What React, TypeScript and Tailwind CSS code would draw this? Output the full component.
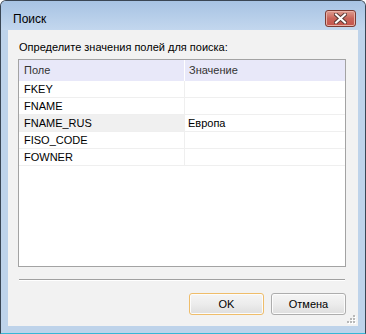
import React from 'react';

const rows: { name: string; value: string; current?: boolean }[] = [
  { name: 'FKEY', value: '' },
  { name: 'FNAME', value: '' },
  { name: 'FNAME_RUS', value: 'Европа', current: true },
  { name: 'FISO_CODE', value: '' },
  { name: 'FOWNER', value: '' },
];

const CloseGlyph = () => (
  <svg width="13" height="11" viewBox="0 0 13 11">
    <path d="M2 1.5 L11 9.5 M11 1.5 L2 9.5" stroke="#5b3a36" strokeWidth="4" strokeLinecap="square" />
    <path d="M2 1.5 L11 9.5 M11 1.5 L2 9.5" stroke="#ffffff" strokeWidth="2" strokeLinecap="square" />
  </svg>
);

const Grip = () => (
  <svg width="10" height="10" viewBox="0 0 10 10" className="absolute right-[2px] bottom-[2px]">
    {[
      [7, 1], [4, 4], [7, 4], [1, 7], [4, 7], [7, 7],
    ].map(([x, y]) => (
      <g key={`${x}-${y}`}>
        <rect x={x + 1} y={y + 1} width="2" height="2" fill="#ffffff" />
        <rect x={x} y={y} width="2" height="2" fill="#b8b8b8" />
      </g>
    ))}
  </svg>
);

const Button = ({ label, primary }: { label: string; primary?: boolean }) => (
  <button
    className={`w-[75px] h-[22px] rounded-[3px] border text-[11px] text-black leading-none flex items-center justify-center bg-gradient-to-b from-[#f5f5f5] via-[#ececec] to-[#dedede] shadow-[inset_0_0_0_1px_#fcfcfc] ${
      primary ? 'border-[#efbd6a]' : 'border-[#adadad]'
    }`}
  >
    {label}
  </button>
);

export default function App() {
  return (
    <div
      className="w-[366px] h-[334px] flex flex-col rounded-t-[6px] border border-[#3a4654] border-b-[#36b7d6] bg-[#bed3ea] pb-[7px]"
      style={{ fontFamily: '"Liberation Sans", Arial, sans-serif' }}
    >
      <div className="h-[29px] flex items-center justify-between pl-[12px] pr-[9px] pt-[6px] rounded-t-[5px] bg-gradient-to-b from-[#a7c3e3] to-[#c3d7ee]">
        <span className="text-[12px] text-black">Поиск</span>
        <div className="w-[31px] h-[17px] rounded-[3px] border border-[#7b3b33] bg-gradient-to-b from-[#dd9c90] via-[#c9645a] to-[#c4544c] flex items-center justify-center shadow-[inset_0_0_0_1px_#e9b0a6]">
          <CloseGlyph />
        </div>
      </div>

      <div className="relative mx-[7px] flex-1 bg-[#f2f2f2] flex flex-col text-[11px] text-black">
        <div className="ml-[11px] mt-[11px] h-[13px] leading-[13px]">Определите значения полей для поиска:</div>

        <div className="ml-[10px] mr-[12px] mt-[5px] h-[208px] border border-[#a3a3a3] bg-white flex flex-col">
          <div className="h-[21px] flex bg-[#e8e8f9] text-[#333]">
            <div className="w-[166px] pl-[5px] flex items-center border-r border-white">Поле</div>
            <div className="flex-1 pl-[4px] flex items-center">Значение</div>
          </div>
          {rows.map((r) => (
            <div key={r.name} className="h-[17px] flex border-b border-[#efefef]">
              <div className={`w-[166px] pl-[5px] flex items-center border-r border-[#efefef] ${r.current ? 'bg-[#f0f0f0]' : ''}`}>
                {r.name}
              </div>
              <div className="flex-1 pl-[3px] flex items-center">{r.value}</div>
            </div>
          ))}
        </div>

        <div className="ml-[11px] mr-[13px] mt-[12px] h-[2px] border-t border-[#a0a0a0] border-b border-b-white" />

        <div className="mt-[12px] mr-[12px] flex justify-end gap-[7px]">
          <Button label="OK" primary />
          <Button label="Отмена" />
        </div>

        <Grip />
      </div>
    </div>
  );
}
